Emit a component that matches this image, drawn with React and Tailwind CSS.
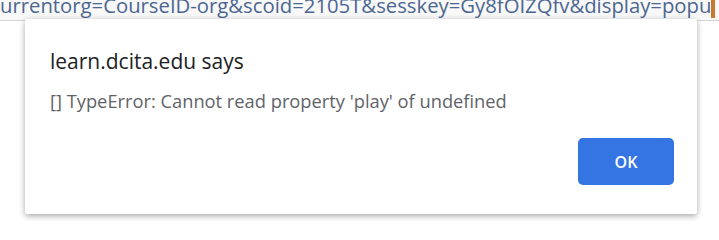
import React from "react";

const App = () => {
  return (
    <div className="w-[719px] h-[231px] bg-white overflow-hidden relative" style={{ fontFamily: '"Open Sans", "Noto Sans", sans-serif' }}>
      <div className="h-[21px] border-b border-[#d4d4d4] bg-[#f8f8f8] overflow-hidden">
        <div className="-mt-[9px] whitespace-nowrap text-[20.3px] leading-[28px] text-[#4b6690]">
          urrentorg=CourseID-org&amp;scoid=2105T&amp;sesskey=Gy8fOIZQfv&amp;display=popu
          <span className="inline-block w-[4px] h-[20px] bg-[#c9782e] align-middle" />
        </div>
      </div>
      {/* alert dialog */}
      <div className="absolute left-[25px] top-[19px] w-[672px] h-[195px] bg-white rounded-[2px] shadow-[0_2px_6px_rgba(0,0,0,0.35)] flex flex-col">
        <div className="px-[25px] pt-[28px]">
          <h1 className="text-[21px] leading-[29px] text-[#202124]">learn.dcita.edu says</h1>
          <p className="mt-[13px] text-[18.3px] leading-[24px] text-[#5f6368]">[] TypeError: Cannot read property 'play' of undefined</p>
        </div>
        <div className="flex justify-end pr-[23px] mt-[25px]">
          <button className="w-[96px] h-[47px] rounded-[5px] bg-[#3574e3] text-white text-[16px] font-semibold">OK</button>
        </div>
      </div>
    </div>
  );
};

export default App;
